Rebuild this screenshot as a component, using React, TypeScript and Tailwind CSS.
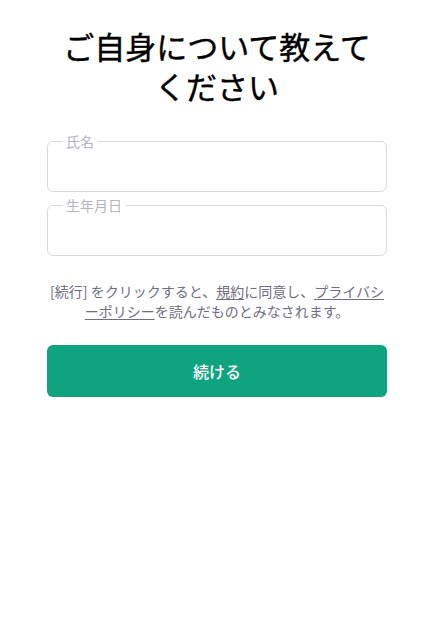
export default function App() {
  return (
    <div
      className="min-h-screen bg-white"
      style={{ fontFamily: '"Noto Sans CJK JP", "Noto Sans", sans-serif' }}
    >
      <div className="ml-[47px] w-[340px] pt-[26px]">
        <h1 className="text-center text-[31px] font-normal leading-10 text-black [-webkit-text-stroke:0.4px_black]">
          ご自身について教えて
          <br />
          ください
        </h1>

        <div className="mt-[27px] flex flex-col gap-[5px]">
          {["氏名", "生年月日"].map((label) => (
            <fieldset
              key={label}
              className="h-[59px] rounded-md border border-[#d9d9e3] px-[14px]"
            >
              <legend className="px-[4px] text-[14px] leading-[16px] text-[#b4b4c0]">
                {label}
              </legend>
              <input className="h-full w-full bg-transparent text-base outline-none" />
            </fieldset>
          ))}
        </div>

        <p className="mt-[25px] text-center text-[14px] leading-5 text-[#6e6e80]">
          [続行] をクリックすると、
          <span className="underline underline-offset-2">規約</span>
          に同意し、
          <span className="underline underline-offset-2">プライバシーポリシー</span>
          を読んだものとみなされます。
        </p>

        <button className="mt-[24px] h-[52px] w-full rounded-md bg-[#10a37f] text-base font-medium text-white">
          続ける
        </button>
      </div>
    </div>
  );
}
